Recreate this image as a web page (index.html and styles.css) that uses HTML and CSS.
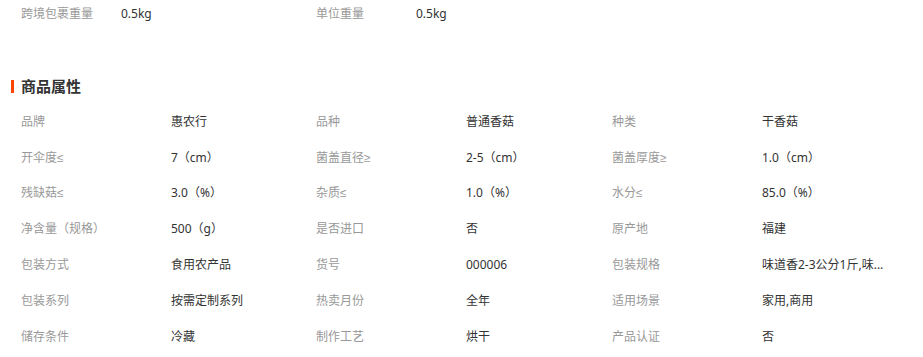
FILE: index.html
```html
<!DOCTYPE html>
<html lang="zh-CN">
<head>
<meta charset="utf-8">
<title>商品属性</title>
<link rel="stylesheet" href="styles.css">
</head>
<body>
<div class="page">
  <div class="top-row">
    <span class="t-label">跨境包裹重量</span><span class="t-value">0.5kg</span>
    <span class="t-label">单位重量</span><span class="t-value">0.5kg</span>
  </div>
  <h2 class="section-title">商品属性</h2>
  <div class="attrs">
    <span class="label">品牌</span><span class="value">惠农行</span>
    <span class="label">品种</span><span class="value">普通香菇</span>
    <span class="label">种类</span><span class="value">干香菇</span>

    <span class="label">开伞度<span class="sym">≤</span></span><span class="value">7（cm）</span>
    <span class="label">菌盖直径<span class="sym">≥</span></span><span class="value">2-5（cm）</span>
    <span class="label">菌盖厚度<span class="sym">≥</span></span><span class="value">1.0（cm）</span>

    <span class="label">残缺菇<span class="sym">≤</span></span><span class="value">3.0（%）</span>
    <span class="label">杂质<span class="sym">≤</span></span><span class="value">1.0（%）</span>
    <span class="label">水分<span class="sym">≤</span></span><span class="value">85.0（%）</span>

    <span class="label">净含量（规格）</span><span class="value">500（g）</span>
    <span class="label">是否进口</span><span class="value">否</span>
    <span class="label">原产地</span><span class="value">福建</span>

    <span class="label">包装方式</span><span class="value">食用农产品</span>
    <span class="label">货号</span><span class="value">000006</span>
    <span class="label">包装规格</span><span class="value">味道香2-3公分1斤,味...</span>

    <span class="label">包装系列</span><span class="value">按需定制系列</span>
    <span class="label">热卖月份</span><span class="value">全年</span>
    <span class="label">适用场景</span><span class="value">家用,商用</span>

    <span class="label">储存条件</span><span class="value">冷藏</span>
    <span class="label">制作工艺</span><span class="value">烘干</span>
    <span class="label">产品认证</span><span class="value">否</span>
  </div>
</div>
</body>
</html>
```
FILE: styles.css
```css
html, body {
  margin: 0;
  padding: 0;
  background: #fff;
}
body {
  font-family: "Noto Sans", "Noto Sans CJK SC", sans-serif;
  font-size: 12px;
  color: #333;
}
.page {
  padding-left: 21px;
}
.top-row {
  display: grid;
  grid-template-columns: 100px 195px 100px 1fr;
  height: 28px;
  line-height: 28px;
}
.t-label { color: #999; }
.t-value { color: #333; }
.section-title {
  display: flex;
  align-items: center;
  gap: 7px;
  margin: 48px 0 0 -10px;
  height: 20px;
  line-height: 20px;
  font-size: 15px;
  font-weight: bold;
  color: #333;
}
.section-title::before {
  content: "";
  width: 3px;
  height: 13px;
  background: #ff4400;
}
.attrs {
  display: grid;
  grid-template-columns: 150px 145px 150px 146px 150px 1fr;
  grid-auto-rows: 35.8px;
  align-items: center;
  margin-top: 7px;
}
.label { color: #999; }
.sym {
  font-family: "Liberation Sans", sans-serif;
}
.value {
  color: #333;
  white-space: nowrap;
}
```
